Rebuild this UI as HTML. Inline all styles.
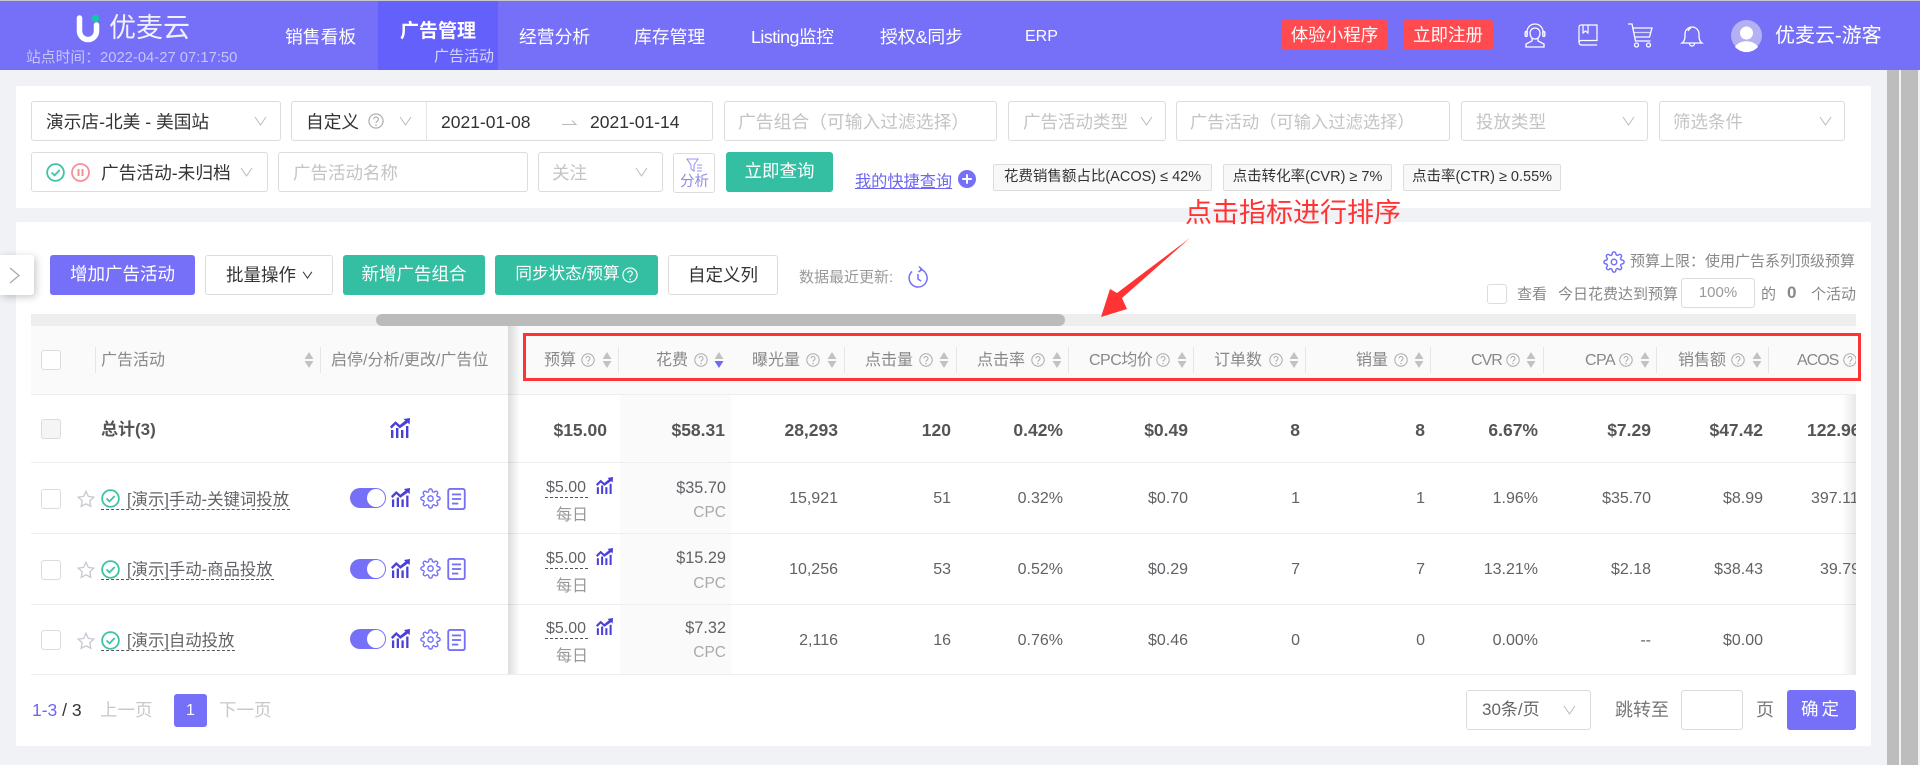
<!DOCTYPE html>
<html lang="zh"><head><meta charset="utf-8"><title>优麦云</title>
<style>
html,body{margin:0;padding:0;width:1920px;height:765px;overflow:hidden;background:#f0f2f5}
body{position:relative;font-family:"Liberation Sans","Noto Sans CJK SC",sans-serif;color:#333}
.a{position:absolute}
.t{position:absolute;white-space:nowrap;line-height:24px;height:24px}
.r{text-align:right}
.nav{font-size:17.8px;color:#fff;top:25px}
.box{position:absolute;box-sizing:border-box;background:#fff;border:1px solid #dcdcdf;border-radius:3px}
.f{font-size:17.7px;color:#333}
.ph{font-size:17.5px;color:#c4c4c4}
.btn{position:absolute;box-sizing:border-box;height:40px;line-height:38px;text-align:center;border-radius:3px;font-size:17.5px;white-space:nowrap}
.p{background:#7570f7;color:#fff}.g{background:#34bfa3;color:#fff}.w{background:#fff;border:1px solid #dcdcdf;color:#333}
.tag{position:absolute;box-sizing:border-box;top:164px;height:27px;line-height:25px;background:#f8f8f8;border:1px solid #ddd;border-radius:2px;font-size:14.5px;text-align:center;color:#333;white-space:nowrap}
.h{font-size:16px;color:#888;top:349px}
.lt{letter-spacing:-.5px}
.v{font-size:16px;color:#606266}
.b{font-weight:bold;font-size:17.5px;color:#555;top:418px}
.n{color:#606266;font-size:16.4px}
.line{position:absolute;left:31px;width:1825px;height:1px;background:#eee}
.dv{position:absolute;top:347px;width:1px;height:26px;background:#e6e6e6}
.cb{position:absolute;box-sizing:border-box;left:41px;width:20px;height:20px;background:#fff;border:1px solid #dcdcdf;border-radius:3px}
.dash{position:absolute;border-top:1px dashed #555;height:0}
.tg{position:absolute;left:350px;width:36px;height:20px;border-radius:10px;background:#7570f7}
.tg i{position:absolute;right:1px;top:1px;width:18px;height:18px;border-radius:9px;background:#fff}
svg{position:absolute;overflow:visible;display:block}
</style></head><body>
<svg width="0" height="0" style="position:absolute">
<defs>
<symbol id="chev" viewBox="0 0 13 10"><polyline points="1,1 6.5,9 12,1" fill="none" stroke="#bbb" stroke-width="1"/></symbol>
<symbol id="help" viewBox="0 0 14 14"><circle cx="7" cy="7" r="6.2" fill="none" stroke="#aaa" stroke-width="1"/><path d="M5 5.4a2 2 0 1 1 3 1.8c-.7.4-1 .8-1 1.5" fill="none" stroke="#aaa" stroke-width="1"/><circle cx="7" cy="10.6" r=".7" fill="#aaa"/></symbol>
<symbol id="sort" viewBox="0 0 10 16"><path d="M5 0L9.5 7H.5Z" fill="#c2c2c2"/><path d="M5 16L.5 9H9.5Z" fill="#c2c2c2"/></symbol>
<symbol id="sortd" viewBox="0 0 10 16"><path d="M5 0L9.5 7H.5Z" fill="#c2c2c2"/><path d="M5 16L.5 9H9.5Z" fill="#6f6af5"/></symbol>
<symbol id="chart" viewBox="0 0 20 20"><g fill="#4a3fd6"><rect x="1" y="12" width="2.4" height="8"/><rect x="6" y="10" width="2.4" height="10"/><rect x="11" y="12" width="2.4" height="8"/><rect x="16" y="8" width="2.4" height="12"/><path d="M0 8.5L5.5 3.2 9.8 7 15.2 2.6 13.6 1 20 0 19.6 6.6 17.8 4.8 9.8 10.4 5.6 6.4 1.6 10.6Z"/></g></symbol>
<symbol id="gear" viewBox="0 0 24 24"><g fill="none" stroke="#7570f7" stroke-width="1.6"><path d="M12 15a3 3 0 1 0 0-6 3 3 0 0 0 0 6z"/><path d="M19.4 15a1.65 1.65 0 0 0 .33 1.82l.06.06a2 2 0 1 1-2.83 2.83l-.06-.06a1.65 1.65 0 0 0-1.82-.33 1.65 1.65 0 0 0-1 1.51V21a2 2 0 0 1-4 0v-.09A1.65 1.65 0 0 0 9 19.4a1.65 1.65 0 0 0-1.82.33l-.06.06a2 2 0 1 1-2.83-2.83l.06-.06a1.65 1.65 0 0 0 .33-1.82 1.65 1.65 0 0 0-1.51-1H3a2 2 0 0 1 0-4h.09A1.65 1.65 0 0 0 4.6 9a1.65 1.65 0 0 0-.33-1.82l-.06-.06a2 2 0 1 1 2.83-2.83l.06.06a1.65 1.65 0 0 0 1.82.33H9a1.65 1.65 0 0 0 1-1.51V3a2 2 0 0 1 4 0v.09a1.65 1.65 0 0 0 1 1.51 1.65 1.65 0 0 0 1.82-.33l.06-.06a2 2 0 1 1 2.83 2.83l-.06.06a1.65 1.65 0 0 0-.33 1.82V9a1.65 1.65 0 0 0 1.51 1H21a2 2 0 0 1 0 4h-.09a1.65 1.65 0 0 0-1.51 1z"/></g></symbol>
<symbol id="doc" viewBox="0 0 20 24"><rect x="1" y="1" width="18" height="22" rx="2" fill="none" stroke="#7570f7" stroke-width="2"/><g fill="#7570f7"><rect x="5" y="6" width="10" height="2"/><rect x="5" y="11" width="10" height="2"/><rect x="5" y="16" width="7" height="2"/></g></symbol>
<symbol id="check" viewBox="0 0 20 20"><circle cx="10" cy="10" r="8.8" fill="none" stroke="#3fc3a5" stroke-width="1.9"/><polyline points="5.8,10 9,13 14.4,7.4" fill="none" stroke="#3fc3a5" stroke-width="1.9"/></symbol>
<symbol id="star" viewBox="0 0 20 20"><path d="M10 1.5l2.6 5.6 6 .8-4.4 4.2 1.1 6.1L10 15.3l-5.3 2.9 1.1-6.1L1.4 7.9l6-.8z" fill="none" stroke="#c9c9d2" stroke-width="1.5"/></symbol>
</defs></svg>

<!-- top bar -->
<div class="a" style="left:0;top:0;width:1920px;height:70px;background:#7570f7"></div>
<div class="a" style="left:0;top:0;width:1920px;height:1px;background:#c8c8c8"></div>
<div class="a" style="left:378px;top:1px;width:120px;height:69px;background:#6460fb"></div>
<svg style="left:74px;top:14px" width="28" height="30" viewBox="0 0 28 30"><path d="M5.5 4V17a8.5 8.5 0 0 0 17 0V11" fill="none" stroke="#fff" stroke-width="5.5" stroke-linecap="round"/><circle cx="21.5" cy="4.5" r="3.8" fill="#10c9a9"/></svg>
<div class="t" style="left:109px;top:16px;font-size:27px;color:#f2f2fe">优麦云</div>
<div class="t" style="left:26px;top:46px;font-size:14.8px;color:#c6c4f8">站点时间：2022-04-27 07:17:50</div>
<div class="t nav" style="left:285px">销售看板</div>
<div class="t nav" style="left:400px;top:20px;font-size:19px;font-weight:bold">广告管理</div>
<div class="t" style="left:434px;top:45px;font-size:15px;color:#d8d6fb">广告活动</div>
<div class="t nav" style="left:519px">经营分析</div>
<div class="t nav" style="left:634px">库存管理</div>
<div class="t nav lt" style="left:751px">Listing监控</div>
<div class="t nav" style="left:880px">授权&amp;同步</div>
<div class="t nav" style="left:1025px;font-size:16px">ERP</div>
<div class="btn" style="left:1281px;top:20px;width:107px;height:30px;line-height:30px;background:#ff4a4f;color:#fff;font-size:17.5px">体验小程序</div>
<div class="btn" style="left:1403px;top:20px;width:90px;height:30px;line-height:30px;background:#ff4a4f;color:#fff;font-size:17.5px">立即注册</div>
<svg style="left:1523px;top:23px" width="24" height="25" viewBox="0 0 24 25" fill="none" stroke="#fff" stroke-width="1.3"><path d="M4 12V9a8 8 0 0 1 16 0v3"/><path d="M7 10a5 5 0 0 1 10 0c0 3-1.6 6-5 6s-5-3-5-6z"/><path d="M9 15.5v2.5l-6 3v3h18v-3l-6-3v-2.5"/><rect x="2.2" y="8.5" width="2" height="5" rx="1"/><rect x="19.8" y="8.5" width="2" height="5" rx="1"/></svg>
<svg style="left:1578px;top:24px" width="20" height="22" viewBox="0 0 20 22" fill="none" stroke="#fff" stroke-width="1.2"><path d="M1 18V3a2 2 0 0 1 2-2h16v15.500H3a2 2 0 0 0-2 2 2.500 2.500 0 0 0 2.500 2.500H19"/><path d="M5 1v8l2.500-2L10 9V1"/></svg>
<svg style="left:1628px;top:23px" width="25" height="25" viewBox="0 0 25 25" fill="none" stroke="#fff" stroke-width="1.3"><path d="M0 1h4l3.500 17h15"/><path d="M5 5h19l-2.500 9H7"/><path d="M6 9.500h17" stroke-opacity=".7"/><circle cx="8.500" cy="22" r="2"/><circle cx="20.500" cy="22" r="2"/></svg>
<svg style="left:1681px;top:24px" width="22" height="24" viewBox="0 0 22 24" fill="none" stroke="#fff" stroke-width="1.3"><path d="M1 19c3-2 3-5 3-9a7 7 0 0 1 14 0c0 4 0 7 3 9z"/><path d="M8.500 19.500a2.500 2.500 0 0 0 5 0"/><path d="M7 7a5 5 0 0 1 3-3"/></svg>
<svg style="left:1731px;top:20px" width="31" height="31" viewBox="0 0 31 31"><circle cx="15.500" cy="15.500" r="15.500" fill="#b3b0f3"/><circle cx="15.500" cy="13" r="6.500" fill="#fff"/><path d="M4 27a12 8 0 0 1 23 0 15.500 15.500 0 0 1-23 0z" fill="#fff"/></svg>
<div class="t" style="left:1775px;top:24px;font-size:20px;color:#fff">优麦云-游客</div>

<!-- page scrollbars -->
<div class="a" style="left:1887px;top:70px;width:12px;height:695px;background:#bdbdbd"></div>
<div class="a" style="left:1901px;top:70px;width:17px;height:695px;background:#bdbdbd"></div>

<!-- filter card -->
<div class="a" style="left:16px;top:86px;width:1855px;height:122px;background:#fff;border-radius:2px"></div>
<div class="box" style="left:31px;top:101px;width:250px;height:40px"></div>
<div class="t f" style="left:46px;top:110px">演示店-北美 - 美国站</div>
<svg style="left:254px;top:116px" width="13" height="10"><use href="#chev"/></svg>
<div class="box" style="left:291px;top:101px;width:422px;height:40px"></div>
<div class="a" style="left:426px;top:102px;width:1px;height:38px;background:#e4e4e4"></div>
<div class="t f" style="left:306px;top:110px">自定义</div>
<svg style="left:368px;top:113px" width="16" height="16"><use href="#help"/></svg>
<svg style="left:399px;top:116px" width="13" height="10"><use href="#chev"/></svg>
<div class="t f" style="left:441px;top:110px;font-size:17.5px">2021-01-08</div>
<svg style="left:562px;top:118px" width="15" height="8" viewBox="0 0 15 8"><path d="M0 6.500H14L10 2.500" fill="none" stroke="#bbb" stroke-width="1"/></svg>
<div class="t f" style="left:590px;top:110px;font-size:17.5px">2021-01-14</div>
<div class="box" style="left:724px;top:101px;width:273px;height:40px"></div>
<div class="t ph" style="left:738px;top:110px;font-size:17.8px">广告组合（可输入过滤选择）</div>
<div class="box" style="left:1008px;top:101px;width:158px;height:40px"></div>
<div class="t ph" style="left:1023px;top:110px">广告活动类型</div>
<svg style="left:1140px;top:116px" width="13" height="10"><use href="#chev"/></svg>
<div class="box" style="left:1176px;top:101px;width:274px;height:40px"></div>
<div class="t ph" style="left:1190px;top:110px;font-size:17.3px">广告活动（可输入过滤选择）</div>
<div class="box" style="left:1461px;top:101px;width:187px;height:40px"></div>
<div class="t ph" style="left:1476px;top:110px">投放类型</div>
<svg style="left:1622px;top:116px" width="13" height="10"><use href="#chev"/></svg>
<div class="box" style="left:1659px;top:101px;width:186px;height:40px"></div>
<div class="t ph" style="left:1673px;top:110px">筛选条件</div>
<svg style="left:1819px;top:116px" width="13" height="10"><use href="#chev"/></svg>

<div class="box" style="left:31px;top:152px;width:237px;height:40px"></div>
<svg style="left:46px;top:163px" width="19" height="19"><use href="#check"/></svg>
<svg style="left:71px;top:163px" width="19" height="19" viewBox="0 0 19 19"><circle cx="9.500" cy="9.500" r="8.500" fill="none" stroke="#f98e9b" stroke-width="1.800"/><rect x="6.500" y="6" width="2" height="7" fill="#f98e9b"/><rect x="10.500" y="6" width="2" height="7" fill="#f98e9b"/></svg>
<div class="t f" style="left:101px;top:161px">广告活动-未归档</div>
<svg style="left:240px;top:167px" width="13" height="10"><use href="#chev"/></svg>
<div class="box" style="left:278px;top:152px;width:250px;height:40px"></div>
<div class="t ph" style="left:293px;top:161px">广告活动名称</div>
<div class="box" style="left:538px;top:152px;width:125px;height:40px"></div>
<div class="t ph" style="left:552px;top:161px">关注</div>
<svg style="left:635px;top:167px" width="13" height="10"><use href="#chev"/></svg>
<div class="box" style="left:673px;top:153px;width:42px;height:40px"></div>
<svg style="left:686px;top:158px" width="17" height="15" viewBox="0 0 17 15" fill="none" stroke="#9a96f2" stroke-width="1.100"><path d="M1 1h11L8 7v6L5 11V7z"/><path d="M11 7h5M11 10h5M11 13h5"/></svg>
<div class="t" style="left:680px;top:170px;font-size:14.500px;color:#8f8ce0">分析</div>
<div class="btn g" style="left:726px;top:152px;width:107px">立即查询</div>
<div class="t" style="left:855px;top:170px;font-size:16.2px;color:#6c66f2;text-decoration:underline">我的快捷查询</div>
<svg style="left:958px;top:170px" width="18" height="18" viewBox="0 0 17 17"><circle cx="8.500" cy="8.500" r="8.500" fill="#7570f7"/><path d="M8.500 4v9M4 8.500h9" stroke="#fff" stroke-width="1.800"/></svg>
<div class="tag" style="left:993px;width:219px">花费销售额占比(ACOS) ≤ 42%</div>
<div class="tag" style="left:1223px;width:169px">点击转化率(CVR) ≥ 7%</div>
<div class="tag" style="left:1403px;width:158px">点击率(CTR) ≥ 0.55%</div>

<!-- table card -->
<div class="a" style="left:16px;top:222px;width:1855px;height:524px;background:#fff;border-radius:2px"></div>

<div class="a" style="left:0;top:255px;width:34px;height:40px;background:#fff;border-radius:0 3px 3px 0;box-shadow:2px 2px 8px rgba(0,0,0,.22)"></div>
<svg style="left:9px;top:267px" width="11" height="17" viewBox="0 0 11 17"><polyline points="1,1 10,8.500 1,16" fill="none" stroke="#aaa" stroke-width="1.300"/></svg>

<div class="btn p" style="left:50px;top:255px;width:145px">增加广告活动</div>
<div class="btn w" style="left:205px;top:255px;width:128px;padding-right:16px">批量操作</div>
<svg style="left:302px;top:271px" width="11" height="8" viewBox="0 0 13 10"><polyline points="1,1 6.500,9 12,1" fill="none" stroke="#333" stroke-width="1.200"/></svg>
<div class="btn g" style="left:343px;top:255px;width:142px">新增广告组合</div>
<div class="btn g" style="left:495px;top:255px;width:163px;font-size:16.6px;padding-right:18px">同步状态/预算</div>
<svg style="left:622px;top:267px" width="16" height="16" viewBox="0 0 14 14"><circle cx="7" cy="7" r="6.200" fill="none" stroke="#fff"/><path d="M5 5.400a2 2 0 1 1 3 1.800c-.7.400-1 .8-1 1.500" fill="none" stroke="#fff"/><circle cx="7" cy="10.600" r=".7" fill="#fff"/></svg>
<div class="btn w" style="left:668px;top:255px;width:110px">自定义列</div>
<div class="t" style="left:799px;top:266px;font-size:15px;color:#999">数据最近更新:</div>
<svg style="left:907px;top:266px" width="22" height="23" viewBox="0 0 22 23" fill="none" stroke="#7570f7" stroke-width="1.500"><path d="M13 3.200a9 9 0 1 1-8 2.200"/><path d="M12 .5l3 3-3.500 2.500"/><path d="M11 8v5l3 2"/></svg>

<svg style="left:1603px;top:251px" width="22" height="22"><use href="#gear"/></svg>
<div class="t" style="left:1630px;top:250px;font-size:15px;color:#888">预算上限：使用广告系列顶级预算</div>
<div class="box" style="left:1487px;top:284px;width:20px;height:20px"></div>
<div class="t" style="left:1517px;top:283px;font-size:15px;color:#888">查看</div>
<div class="t" style="left:1558px;top:283px;font-size:15px;color:#888">今日花费达到预算</div>
<div class="box" style="left:1681px;top:278px;width:74px;height:30px;text-align:center;line-height:28px;font-size:15px;color:#999">100%</div>
<div class="t" style="left:1761px;top:283px;font-size:15px;color:#888">的</div>
<div class="t" style="left:1787px;top:281px;font-size:17px;color:#888;font-weight:bold">0</div>
<div class="t" style="left:1811px;top:283px;font-size:15px;color:#888">个活动</div>

<div class="a" style="left:31px;top:314px;width:1825px;height:12px;background:#eee"></div>
<div class="a" style="left:376px;top:314px;width:689px;height:12px;background:#bbb;border-radius:6px"></div>

<!-- table -->
<div class="a" style="left:31px;top:326px;width:1825px;height:68px;background:#fafafa"></div>
<div class="a" style="left:620px;top:395px;width:111px;height:279px;background:#fafafa"></div>
<div class="line" style="top:394px"></div>
<div class="line" style="top:462px"></div>
<div class="line" style="top:533px"></div>
<div class="line" style="top:604px"></div>
<div class="line" style="top:674px"></div>
<div class="a" style="left:508px;top:326px;width:12px;height:348px;background:linear-gradient(90deg,rgba(0,0,0,.13),rgba(0,0,0,0))"></div>
<div class="a" style="left:1842px;top:395px;width:14px;height:279px;background:linear-gradient(270deg,rgba(0,0,0,.09),rgba(0,0,0,0))"></div>

<div class="cb" style="top:350px"></div>
<div class="dv" style="left:95px"></div>
<div class="t h" style="left:101px">广告活动</div>
<svg style="left:304px;top:352px" width="10" height="16"><use href="#sort"/></svg>
<div class="dv" style="left:320px"></div>
<div class="t h" style="left:331px">启停/分析/更改/广告位</div>

<div class="a" style="left:0;top:326px;width:1856px;height:348px;overflow:hidden">
<div class="a" style="left:0;top:-326px;width:1920px;height:765px">
<div class="t h" style="left:544px">预算</div><svg style="left:581px;top:353px" width="14" height="14"><use href="#help"/></svg><svg style="left:602px;top:352px" width="10" height="16"><use href="#sort"/></svg><div class="dv" style="left:618px"></div>
<div class="t h" style="left:656px">花费</div><svg style="left:694px;top:353px" width="14" height="14"><use href="#help"/></svg><svg style="left:714px;top:352px" width="10" height="16"><use href="#sortd"/></svg>
<div class="t h" style="left:752px">曝光量</div><svg style="left:806px;top:353px" width="14" height="14"><use href="#help"/></svg><svg style="left:827px;top:352px" width="10" height="16"><use href="#sort"/></svg><div class="dv" style="left:844px"></div>
<div class="t h" style="left:865px">点击量</div><svg style="left:919px;top:353px" width="14" height="14"><use href="#help"/></svg><svg style="left:939px;top:352px" width="10" height="16"><use href="#sort"/></svg><div class="dv" style="left:956px"></div>
<div class="t h" style="left:977px">点击率</div><svg style="left:1031px;top:353px" width="14" height="14"><use href="#help"/></svg><svg style="left:1052px;top:352px" width="10" height="16"><use href="#sort"/></svg><div class="dv" style="left:1068px"></div>
<div class="t h lt" style="left:1089px">CPC均价</div><svg style="left:1156px;top:353px" width="14" height="14"><use href="#help"/></svg><svg style="left:1177px;top:352px" width="10" height="16"><use href="#sort"/></svg><div class="dv" style="left:1193px"></div>
<div class="t h" style="left:1214px">订单数</div><svg style="left:1269px;top:353px" width="14" height="14"><use href="#help"/></svg><svg style="left:1289px;top:352px" width="10" height="16"><use href="#sort"/></svg><div class="dv" style="left:1305px"></div>
<div class="t h" style="left:1356px">销量</div><svg style="left:1394px;top:353px" width="14" height="14"><use href="#help"/></svg><svg style="left:1414px;top:352px" width="10" height="16"><use href="#sort"/></svg><div class="dv" style="left:1430px"></div>
<div class="t h lt" style="left:1471px;letter-spacing:-1px">CVR</div><svg style="left:1506px;top:353px" width="14" height="14"><use href="#help"/></svg><svg style="left:1526px;top:352px" width="10" height="16"><use href="#sort"/></svg><div class="dv" style="left:1543px"></div>
<div class="t h lt" style="left:1585px">CPA</div><svg style="left:1619px;top:353px" width="14" height="14"><use href="#help"/></svg><svg style="left:1640px;top:352px" width="10" height="16"><use href="#sort"/></svg><div class="dv" style="left:1656px"></div>
<div class="t h" style="left:1678px">销售额</div><svg style="left:1731px;top:353px" width="14" height="14"><use href="#help"/></svg><svg style="left:1752px;top:352px" width="10" height="16"><use href="#sort"/></svg><div class="dv" style="left:1768px"></div>
<div class="t h lt" style="left:1797px;letter-spacing:-1px">ACOS</div><svg style="left:1843px;top:353px" width="14" height="14"><use href="#help"/></svg>

<!-- total -->
<div class="t v b r" style="right:1313px">$15.00</div>
<div class="t v b r" style="right:1195px">$58.31</div>
<div class="t v b r" style="right:1082px">28,293</div>
<div class="t v b r" style="right:969px">120</div>
<div class="t v b r" style="right:857px">0.42%</div>
<div class="t v b r" style="right:732px">$0.49</div>
<div class="t v b r" style="right:620px">8</div>
<div class="t v b r" style="right:495px">8</div>
<div class="t v b r" style="right:382px">6.67%</div>
<div class="t v b r" style="right:269px">$7.29</div>
<div class="t v b r" style="right:157px">$47.42</div>
<div class="t v b" style="left:1807px">122.96%</div>

<!-- row 1 -->
<div class="t v r" style="right:1194px;top:476px;font-size:16.3px">$35.70</div><div class="t r" style="right:1194px;top:501px;font-size:15.5px;color:#aaa">CPC</div>
<div class="t v r" style="right:1082px;top:487px">15,921</div><div class="t v r" style="right:969px;top:487px">51</div><div class="t v r" style="right:857px;top:487px">0.32%</div><div class="t v r" style="right:732px;top:487px">$0.70</div><div class="t v r" style="right:620px;top:487px">1</div><div class="t v r" style="right:495px;top:487px">1</div><div class="t v r" style="right:382px;top:487px">1.96%</div><div class="t v r" style="right:269px;top:487px">$35.70</div><div class="t v r" style="right:157px;top:487px">$8.99</div><div class="t v" style="left:1811px;top:487px">397.11%</div>
<!-- row 2 -->
<div class="t v r" style="right:1194px;top:546px;font-size:16.3px">$15.29</div><div class="t r" style="right:1194px;top:572px;font-size:15.5px;color:#aaa">CPC</div>
<div class="t v r" style="right:1082px;top:558px">10,256</div><div class="t v r" style="right:969px;top:558px">53</div><div class="t v r" style="right:857px;top:558px">0.52%</div><div class="t v r" style="right:732px;top:558px">$0.29</div><div class="t v r" style="right:620px;top:558px">7</div><div class="t v r" style="right:495px;top:558px">7</div><div class="t v r" style="right:382px;top:558px">13.21%</div><div class="t v r" style="right:269px;top:558px">$2.18</div><div class="t v r" style="right:157px;top:558px">$38.43</div><div class="t v" style="left:1820px;top:558px">39.79%</div>
<!-- row 3 -->
<div class="t v r" style="right:1194px;top:616px;font-size:16.3px">$7.32</div><div class="t r" style="right:1194px;top:641px;font-size:15.5px;color:#aaa">CPC</div>
<div class="t v r" style="right:1082px;top:629px">2,116</div><div class="t v r" style="right:969px;top:629px">16</div><div class="t v r" style="right:857px;top:629px">0.76%</div><div class="t v r" style="right:732px;top:629px">$0.46</div><div class="t v r" style="right:620px;top:629px">0</div><div class="t v r" style="right:495px;top:629px">0</div><div class="t v r" style="right:382px;top:629px">0.00%</div><div class="t v r" style="right:269px;top:629px">--</div><div class="t v r" style="right:157px;top:629px">$0.00</div>
</div></div>

<!-- total left -->
<div class="cb" style="top:419px;background:#f5f5f5"></div>
<div class="t" style="left:101px;top:418px;font-size:17px;font-weight:bold;color:#555">总计(3)</div>
<svg style="left:390px;top:418px" width="20" height="20"><use href="#chart"/></svg>

<!-- row budget -->
<div class="t v" style="left:546px;top:476px">$5.00</div><div class="dash" style="left:545px;top:497px;width:43px"></div><svg style="left:596px;top:477px" width="17" height="17"><use href="#chart"/></svg><div class="t" style="left:556px;top:504px;font-size:16px;color:#999">每日</div>
<div class="t v" style="left:546px;top:547px">$5.00</div><div class="dash" style="left:545px;top:568px;width:43px"></div><svg style="left:596px;top:548px" width="17" height="17"><use href="#chart"/></svg><div class="t" style="left:556px;top:575px;font-size:16px;color:#999">每日</div>
<div class="t v" style="left:546px;top:617px">$5.00</div><div class="dash" style="left:545px;top:638px;width:43px"></div><svg style="left:596px;top:618px" width="17" height="17"><use href="#chart"/></svg><div class="t" style="left:556px;top:645px;font-size:16px;color:#999">每日</div>

<!-- row left 1 -->
<div class="cb" style="top:489px"></div>
<svg style="left:77px;top:490px" width="18" height="18"><use href="#star"/></svg>
<svg style="left:101px;top:489px" width="19" height="19"><use href="#check"/></svg>
<div class="t n" style="left:127px;top:488px">[演示]手动-关键词投放</div>
<div class="dash" style="left:101px;top:509px;width:189px"></div>
<div class="tg" style="top:488px"><i></i></div>
<svg style="left:391px;top:488px" width="19" height="19"><use href="#chart"/></svg>
<svg style="left:420px;top:488px" width="21" height="21"><use href="#gear"/></svg>
<svg style="left:447px;top:488px" width="19" height="22"><use href="#doc"/></svg>
<!-- row left 2 -->
<div class="cb" style="top:560px"></div>
<svg style="left:77px;top:561px" width="18" height="18"><use href="#star"/></svg>
<svg style="left:101px;top:560px" width="19" height="19"><use href="#check"/></svg>
<div class="t n" style="left:127px;top:558px">[演示]手动-商品投放</div>
<div class="dash" style="left:101px;top:579px;width:173px"></div>
<div class="tg" style="top:559px"><i></i></div>
<svg style="left:391px;top:559px" width="19" height="19"><use href="#chart"/></svg>
<svg style="left:420px;top:558px" width="21" height="21"><use href="#gear"/></svg>
<svg style="left:447px;top:558px" width="19" height="22"><use href="#doc"/></svg>
<!-- row left 3 -->
<div class="cb" style="top:630px"></div>
<svg style="left:77px;top:632px" width="18" height="18"><use href="#star"/></svg>
<svg style="left:101px;top:631px" width="19" height="19"><use href="#check"/></svg>
<div class="t n" style="left:127px;top:629px">[演示]自动投放</div>
<div class="dash" style="left:101px;top:650px;width:134px"></div>
<div class="tg" style="top:629px"><i></i></div>
<svg style="left:391px;top:629px" width="19" height="19"><use href="#chart"/></svg>
<svg style="left:420px;top:629px" width="21" height="21"><use href="#gear"/></svg>
<svg style="left:447px;top:629px" width="19" height="22"><use href="#doc"/></svg>

<!-- pagination -->
<div class="t" style="left:32px;top:698px;font-size:17.5px;color:#333"><span style="color:#6c66f2">1-3</span> / 3</div>
<div class="t" style="left:100px;top:698px;font-size:17.5px;color:#c8c8c8">上一页</div>
<div class="a p" style="left:174px;top:694px;width:33px;height:33px;border-radius:3px;line-height:33px;text-align:center;font-size:16px">1</div>
<div class="t" style="left:219px;top:698px;font-size:17.5px;color:#c8c8c8">下一页</div>
<div class="box" style="left:1466px;top:690px;width:125px;height:40px"></div>
<div class="t" style="left:1482px;top:698px;font-size:17px;color:#666">30条/页</div>
<svg style="left:1563px;top:705px" width="13" height="10"><use href="#chev"/></svg>
<div class="t" style="left:1615px;top:698px;font-size:18px;color:#777">跳转至</div>
<div class="box" style="left:1681px;top:690px;width:62px;height:40px"></div>
<div class="t" style="left:1756px;top:698px;font-size:18px;color:#777">页</div>
<div class="btn p" style="left:1787px;top:690px;width:69px;letter-spacing:3px">确定</div>

<!-- annotation -->
<div class="a" style="left:523px;top:333px;width:1338px;height:48px;box-sizing:border-box;border:3px solid #ff3333"></div>
<div class="t" style="left:1185px;top:195px;height:36px;line-height:36px;font-size:27px;color:#ff3333">点击指标进行排序</div>
<svg style="left:0;top:0" width="1920" height="765"><polygon points="1190,238 1122,298 1127,309 1101,317 1110,289 1117,293" fill="#ff3333"/></svg>
</body></html>
